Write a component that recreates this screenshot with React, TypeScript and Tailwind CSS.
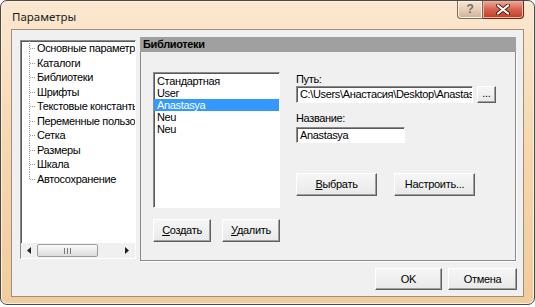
import React from 'react';

const Btn: React.FC<{ className?: string; children: React.ReactNode }> = ({ className = '', children }) => (
  <button className={`flex items-center justify-center bg-linear-to-b from-[#f6f6f6] to-[#e9e9e9] border border-t-white border-l-white border-r-[#5f5f5f] border-b-[#5f5f5f] shadow-[inset_-1px_-1px_0_#a0a0a0] text-[11px] tracking-[-0.3px] text-black ${className}`}>
    {children}
  </button>
);

const sunken = 'border border-t-[#8a8a8a] border-l-[#8a8a8a] border-r-white border-b-white shadow-[inset_1px_1px_0_#5a5a5a]';

const treeItems = [
  'Основные параметры',
  'Каталоги',
  'Библиотеки',
  'Шрифты',
  'Текстовые константы',
  'Переменные пользователя',
  'Сетка',
  'Размеры',
  'Шкала',
  'Автосохранение',
];

const libs = ['Стандартная', 'User', 'Anastasya', 'Neu', 'Neu'];

const TreeRow: React.FC<{ label: string; last: boolean }> = ({ label, last }) => (
  <div className="flex items-center h-[14.5px] whitespace-nowrap">
    <svg width="15" height="14.5" className="shrink-0">
      <line x1="7.5" y1="0" x2="7.5" y2={last ? 7 : 14.5} stroke="#9a9a9a" strokeDasharray="1 1" />
      <line x1="8" y1="7.5" x2="14" y2="7.5" stroke="#9a9a9a" strokeDasharray="1 1" />
    </svg>
    <span className="leading-[14px]">{label}</span>
  </div>
);

export default function App() {
  return (
    <div className="w-[535px] h-[307px] bg-white font-['Liberation_Sans',Arial,sans-serif] text-[11px] tracking-[-0.35px] text-black">
      <div className="w-[535px] h-[305px] rounded-[7px] border border-[#4a4a4a] bg-linear-to-b from-[#fbe8d0] via-[#f6d7ae] to-[#f1cc9c] shadow-[inset_0_0_0_1px_#fdf0de] flex flex-col px-[10px] pb-[7px]">
        {/* title bar */}
        <div className="h-[28px] shrink-0 flex items-start justify-between">
          <span className="mt-[7px] ml-[1px] text-[11.5px] tracking-normal font-['Noto_Sans',sans-serif] text-[#1a1a1a]">Параметры</span>
          <div className="flex">
            <div className="w-[26px] h-[18px] flex items-center justify-center rounded-bl-[4px] border border-t-0 border-[#7d6a58] bg-linear-to-b from-[#f4e6d6] via-[#e6cfb5] to-[#cdb295] shadow-[inset_0_0_0_1px_#fbf1e6]">
              <span className="text-[12px] font-bold text-[#7a6d63] leading-none mt-[-1px]">?</span>
            </div>
            <div className="w-[41px] h-[18px] flex items-center justify-center rounded-br-[4px] border border-t-0 border-l-0 border-[#6e2a20] bg-linear-to-b from-[#eca99a] via-[#d4624e] to-[#c23b26] shadow-[inset_0_0_0_1px_#f0b0a0]">
              <svg width="14" height="11" viewBox="0 0 14 11">
                <path d="M2 1.5 L12 9.5 M12 1.5 L2 9.5" stroke="#5a1a12" strokeWidth="4" strokeLinecap="round" />
                <path d="M2 1.5 L12 9.5 M12 1.5 L2 9.5" stroke="#ffffff" strokeWidth="2.2" strokeLinecap="round" />
              </svg>
            </div>
          </div>
        </div>

        {/* client area */}
        <div className="flex-1 border border-[#a08f7c] bg-[#f0f0f0] flex flex-col">
          <div className="flex items-start pl-[8px] pt-[7px] gap-[4px]">
            {/* tree */}
            <div className={`mt-[3px] w-[116px] h-[219px] bg-white flex flex-col ${sunken}`}>
              <div className="flex-1 overflow-hidden pl-[1px]">
                {treeItems.map((t, i) => (
                  <TreeRow key={i} label={t} last={i === treeItems.length - 1} />
                ))}
              </div>
              <div className="h-[15px] shrink-0 flex items-center bg-[#f0f0f0]">
                <div className="w-[16px] h-full flex items-center justify-center">
                  <svg width="4" height="7"><path d="M4 0 L0 3.5 L4 7 Z" fill="#222" /></svg>
                </div>
                <div className="w-[61px] h-[13px] rounded-[2px] border border-[#9c9c9c] bg-linear-to-b from-[#fbfbfb] to-[#dcdcdc] flex items-center justify-center">
                  <svg width="7" height="6"><path d="M0.5 0 V6 M3.5 0 V6 M6.5 0 V6" stroke="#777" /></svg>
                </div>
                <div className="flex-1" />
                <div className="w-[16px] h-full flex items-center justify-center">
                  <svg width="4" height="7"><path d="M0 0 L4 3.5 L0 7 Z" fill="#222" /></svg>
                </div>
              </div>
            </div>

            {/* right panel */}
            <div className="w-[376px] h-[224px] flex flex-col">
              <div className="h-[15px] shrink-0 bg-[#a0a0a0] flex items-center pl-[3px] font-bold">Библиотеки</div>
              <div className="flex-1 border border-t-0 border-l-[#8a8a8a] border-r-[#8a8a8a] border-b-[#8a8a8a] shadow-[1px_1px_0_#ffffff] flex pl-[12px] pt-[20px]">
                {/* list column */}
                <div className="flex flex-col">
                  <div className={`w-[127px] h-[136px] bg-white pt-[2px] ${sunken}`}>
                    {libs.map((l, i) => (
                      <div
                        key={i}
                        className={`h-[12px] leading-[12px] pl-[3px] overflow-hidden ${i === 2 ? 'bg-[#3399ff] text-white' : ''}`}
                      >
                        {l}
                      </div>
                    ))}
                  </div>
                  <div className="flex gap-[11px] mt-[11px]">
                    <Btn className="w-[58px] h-[23px]"><span><u>С</u>оздать</span></Btn>
                    <Btn className="w-[58px] h-[23px]"><span><u>У</u>далить</span></Btn>
                  </div>
                </div>

                {/* fields column */}
                <div className="flex flex-col ml-[16px]">
                  <div className="h-[14px] leading-[14px]">Путь:</div>
                  <div className="flex gap-[4px]">
                    <div className={`w-[177px] h-[17px] bg-white pl-[3px] leading-[15px] whitespace-nowrap overflow-hidden ${sunken}`}>
                      C:\Users\Анастасия\Desktop\Anastasya
                    </div>
                    <Btn className="w-[19px] h-[17px] leading-none pb-[3px] overflow-hidden">...</Btn>
                  </div>
                  <div className="h-[14px] leading-[14px] mt-[8px]">Название:</div>
                  <div className={`mt-[2px] w-[109px] h-[16px] bg-white pl-[3px] leading-[14px] ${sunken}`}>Anastasya</div>
                  <div className="flex gap-[17px] mt-[30px]">
                    <Btn className="w-[81px] h-[23px]"><span><u>В</u>ыбрать</span></Btn>
                    <Btn className="w-[81px] h-[23px]">Настроить...</Btn>
                  </div>
                </div>
              </div>
            </div>
          </div>

          {/* dialog buttons */}
          <div className="flex justify-end gap-[6px] pr-[6px] mt-[7px]">
            <Btn className="w-[67px] h-[22px]">OK</Btn>
            <Btn className="w-[69px] h-[22px]">Отмена</Btn>
          </div>
        </div>
      </div>
    </div>
  );
}
